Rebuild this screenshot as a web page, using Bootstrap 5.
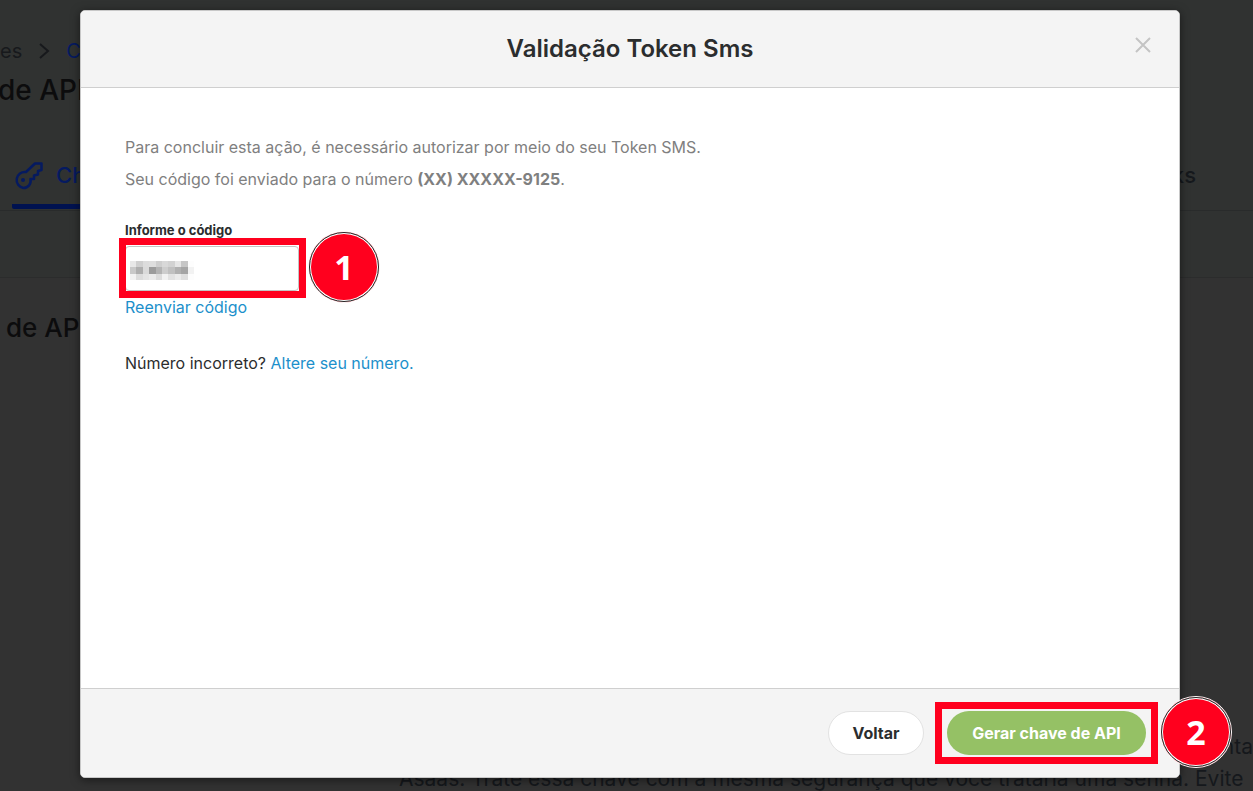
<!DOCTYPE html>
<html lang="pt-BR">
<head>
<meta charset="utf-8">
<meta name="viewport" content="width=device-width, initial-scale=1">
<title>Validação Token Sms</title>
<link href="https://cdn.jsdelivr.net/npm/bootstrap@5.3.0/dist/css/bootstrap.min.css" rel="stylesheet">
<style>
body { font-family: Inter, "Liberation Sans", sans-serif; font-size: 16px; background: #323232; color: #2b2d2e; overflow: hidden; }
a { text-decoration: none; }
/* dimmed page behind the dialog */
.backpage { position: absolute; inset: 0; overflow: hidden; color: #15181c; white-space: nowrap; }
.backpage a { color: #051a60; }
.topzone { background: #303231; height: 278px; border-bottom: 1px solid #2b2c2c; padding-top: 36px; }
.crumbs { font-size: 20px; line-height: 30px; color: #17191c; }
.page-title { font-size: 28px; line-height: 32px; font-weight: 500; color: #0c0c0d; margin: 8px 0 0 -2px; }
.tabs-row { margin-top: 50px; height: 55px; border-bottom: 1px solid #292b2b; padding-left: 12px; padding-right: 57px; font-size: 22px; line-height: 38px; font-weight: 500; }
.tab-on { height: 53px; width: 180px; border-bottom: 5px solid #001250; border-radius: 2px; }
.section-title { font-size: 26px; line-height: 32px; font-weight: 500; color: #0c0c0d; margin: 34px 0 0 6px; }
.hint { font-size: 21px; line-height: 32px; margin: 0 0 -4px 399px; }
/* dialog */
.token-dialog { margin: 10px 73px 13px 80px; min-height: calc(100vh - 23px); background: #fff; border: 1px solid #c8c8c8; border-radius: 5px; box-shadow: 0 2px 10px rgba(0,0,0,.5); }
.dlg-head { height: 77px; background: #f4f4f4; border-bottom: 1px solid #cfcfcf; border-radius: 4px 4px 0 0; }
.dlg-title { font-size: 24px; line-height: 32px; font-weight: 600; }
.dlg-close { right: 28px; top: 26px; width: 16px; height: 16px; }
.dlg-body { padding: 43px 44px; }
.intro { font-size: 16px; line-height: 32px; color: #7f8080; }
.code-label { font-size: 13px; line-height: 16px; font-weight: 700; margin-top: 27px; }
.code-wrap { width: 174px; }
.code-box { width: 100%; height: 45px; border: 1px solid #c4c4c4; border-radius: 4px; padding: 0 6px; display: block; }
.act { color: #1c90cb; }
.dlg-foot { height: 89px; background: #f4f4f4; border-top: 1px solid #cfcfcf; border-radius: 0 0 4px 4px; padding: 0 33px 1px 0; gap: 23px; }
.pill { height: 44px; border-radius: 22px; font-size: 16px; font-weight: 700; padding: 0; }
.pill-back { width: 96px; background: #fff; border: 1px solid #e2e2e2; color: #2b2d2e; }
.pill-go { width: 199px; background: #95c165; color: #fff; border: 0; }
/* step markers */
.frame { border: 7px solid #ff001e; pointer-events: none; }
.frame-code { inset: -8px -7px -7px -6px; }
.frame-go { inset: -9px -12px -9px -12px; }
.step { width: 72px; height: 72px; border-radius: 50%; background: #ff001e; color: #fff; border: 1px solid #fff; outline: 1px solid #222; outline-offset: -2px; box-shadow: inset 0 0 0 2px #fff; font: 700 34px/1 "Open Sans", sans-serif; }
.step-one { left: 183px; top: -15px; }
.step-two { left: 213px; top: -15px; }
.mosaic { left: 5px; top: 15px; }
</style>
<script src="https://cdn.jsdelivr.net/npm/bootstrap@5.3.0/dist/js/bootstrap.bundle.min.js"></script>
</head>
<body>
<div class="backpage d-flex flex-column">
  <header class="topzone">
    <nav class="crumbs d-flex align-items-center"><span>es</span>
      <svg class="mx-3" width="12" height="18" viewBox="0 0 12 18" fill="none" stroke="currentColor" stroke-width="2"><path d="M2 2l8 7-8 7"/></svg>
      <a href="#">Chaves</a></nav>
    <h1 class="page-title">de API</h1>
    <div class="tabs-row d-flex justify-content-between">
      <a href="#" class="tab-on d-flex align-items-start">
        <svg class="mt-1" width="32" height="32" viewBox="0 0 32 32" fill="none" stroke="currentColor" stroke-width="2.500" stroke-linejoin="round"><path d="M14 12L23 3.500h6.500v6.500l-3.500 1v3.500l-4 1v3.500h-3.500C19.500 24 16 28 11.500 28a8 8 0 1 1 2.500-16z"/><circle cx="11" cy="20" r="2" fill="currentColor" stroke="none"/></svg>
        <span class="ms-2 ps-1">Chaves</span></a>
      <span>Webhooks</span>
    </div>
  </header>
  <h2 class="section-title">de API</h2>
  <div class="hint mt-auto"><div class="text-end">nta</div>Asaas. Trate essa chave com a mesma segurança que você trataria uma senha. Evite</div>
</div>

<main class="token-dialog position-relative d-flex flex-column" role="dialog" aria-labelledby="dlgTitle">
  <header class="dlg-head position-relative d-flex align-items-center justify-content-center">
    <h2 class="dlg-title m-0" id="dlgTitle">Validação Token Sms</h2>
    <button type="button" class="dlg-close btn p-0 border-0 position-absolute d-flex" aria-label="Fechar">
      <svg width="16" height="16" viewBox="0 0 16 16" stroke="#c4c4c4" stroke-width="2"><path d="M1 1l14 14M15 1L1 15"/></svg>
    </button>
  </header>
  <div class="dlg-body flex-grow-1">
    <p class="intro m-0">Para concluir esta ação, é necessário autorizar por meio do seu Token SMS.</p>
    <p class="intro m-0">Seu código foi enviado para o número <b>(XX) XXXXX-9125</b>.</p>
    <label class="code-label d-block" for="code">Informe o código</label>
    <div class="code-wrap position-relative mt-2">
      <input class="code-box" id="code" type="text">
      <svg class="mosaic position-absolute" width="64" height="19" viewBox="0 0 64 19" shape-rendering="crispEdges" id="mosaic"></svg>
      <div class="frame frame-code position-absolute"></div>
      <div class="step step-one position-absolute d-flex align-items-center justify-content-center">1</div>
    </div>
    <div class="mt-1"><a href="#" class="act">Reenviar código</a></div>
    <p class="mt-4 pt-2 mb-0">Número incorreto? <a href="#" class="act">Altere seu número.</a></p>
  </div>
  <footer class="dlg-foot d-flex align-items-center justify-content-end">
    <button type="button" class="btn pill pill-back">Voltar</button>
    <div class="position-relative">
      <button type="button" class="btn pill pill-go">Gerar chave de API</button>
      <div class="frame frame-go position-absolute"></div>
      <div class="step step-two position-absolute d-flex align-items-center justify-content-center">2</div>
    </div>
  </footer>
</main>
<script>
const shades = [
  ['e8','cf','dc','de','ce','d8','d2','e6','c6','fd'],
  ['c8','ae','da','9c','b3','cd','c0','b0','a5','f2'],
  ['f2','dc','e4','eb','dc','f2','e2','eb','df','fd']];
const xs = [0,6,13,19,26,32,38,45,51,58,64], ys = [0,6,13,19];
document.getElementById('mosaic').innerHTML = shades.map((r, j) => r.map((c, i) =>
  `<rect x="${xs[i]}" y="${ys[j]}" width="${xs[i+1]-xs[i]}" height="${ys[j+1]-ys[j]}" fill="#${c}${c}${c}"/>`).join('')).join('');
</script>
</body>
</html>
